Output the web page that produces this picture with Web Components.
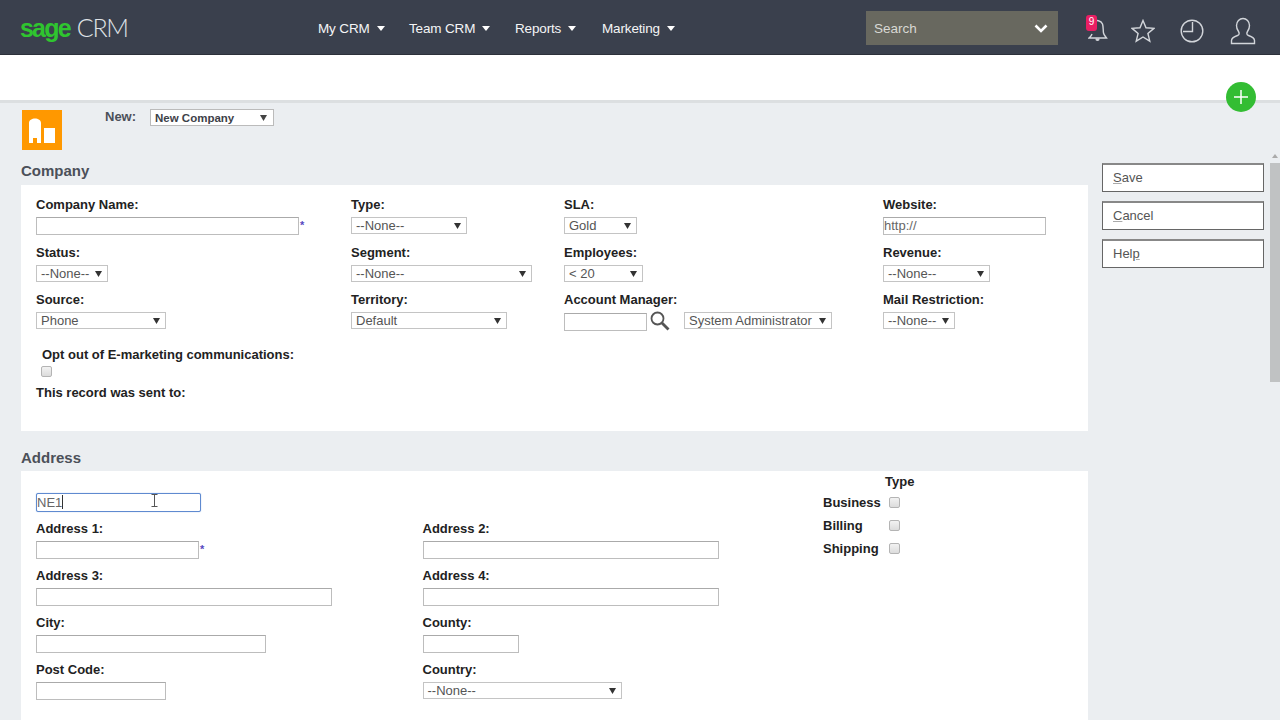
<!DOCTYPE html>
<html>
<head>
<meta charset="utf-8">
<title>Sage CRM</title>
<style>
  html, body { margin: 0; height: 100%; overflow: hidden; }
  body { background: #ebeef1; font-family: "Liberation Sans", Arial, sans-serif; }
</style>
</head>
<body>
<crm-header></crm-header>
<crm-band></crm-band>
<crm-main>
  <crm-toolbar></crm-toolbar>

  <crm-panel heading="Company" style="--panel-height: 246px; --panel-top: 12px">
    <div slot="body" style="display: grid; grid-template-columns: 315px 213px 319px 1fr; row-gap: 9.5px">
      <crm-field label="Company Name:"><crm-input w="263" required></crm-input></crm-field>
      <crm-field label="Type:"><crm-select w="116" value="--None--"></crm-select></crm-field>
      <crm-field label="SLA:"><crm-select w="73" value="Gold"></crm-select></crm-field>
      <crm-field label="Website:"><crm-input w="163" value="http://"></crm-input></crm-field>

      <crm-field label="Status:"><crm-select w="72" value="--None--"></crm-select></crm-field>
      <crm-field label="Segment:"><crm-select w="181" value="--None--"></crm-select></crm-field>
      <crm-field label="Employees:"><crm-select w="79" value="&lt; 20"></crm-select></crm-field>
      <crm-field label="Revenue:"><crm-select w="107" value="--None--"></crm-select></crm-field>

      <crm-field label="Source:"><crm-select w="130" value="Phone"></crm-select></crm-field>
      <crm-field label="Territory:"><crm-select w="156" value="Default"></crm-select></crm-field>
      <crm-field label="Account Manager:">
        <crm-input w="83" style="margin-top: 1px"></crm-input>
        <crm-search-icon></crm-search-icon>
        <crm-select w="148" value="System Administrator"></crm-select>
      </crm-field>
      <crm-field label="Mail Restriction:"><crm-select w="72" value="--None--"></crm-select></crm-field>
    </div>
    <crm-optout slot="body"></crm-optout>
  </crm-panel>

  <crm-panel heading="Address" style="--panel-height: 300px; --panel-top: 2px; --title-gap: 19px; --title-bottom: 5px">
    <div slot="body" style="display: flex">
      <div style="width: 787px; padding-top: 20px; flex: none">
        <crm-focus-input></crm-focus-input>
        <div style="display: grid; grid-template-columns: 386.5px 1fr; row-gap: 9.3px; margin-top: 8.500px">
          <crm-field label="Address 1:"><crm-input w="163" required></crm-input></crm-field>
          <crm-field label="Address 2:"><crm-input w="296"></crm-input></crm-field>
          <crm-field label="Address 3:"><crm-input w="296"></crm-input></crm-field>
          <crm-field label="Address 4:"><crm-input w="296"></crm-input></crm-field>
          <crm-field label="City:"><crm-input w="230"></crm-input></crm-field>
          <crm-field label="County:"><crm-input w="96"></crm-input></crm-field>
          <crm-field label="Post Code:"><crm-input w="130"></crm-input></crm-field>
          <crm-field label="Country:"><crm-select w="199" value="--None--"></crm-select></crm-field>
        </div>
      </div>
      <crm-address-type></crm-address-type>
    </div>
  </crm-panel>

  <crm-button slot="actions" text="Save" key="0"></crm-button>
  <crm-button slot="actions" text="Cancel" key="0"></crm-button>
  <crm-button slot="actions" text="Help" key="3"></crm-button>
</crm-main>

<script>
class CrmHeader extends HTMLElement {
  constructor() {
    super();
    this.attachShadow({ mode: 'open' });
    const navItems = [['My CRM', 91], ['Team CRM', 106], ['Reports', 87], ['Marketing', 80]];
    const nav = navItems.map(([name, w]) => `
      <a style="width:${w}px">${name}<svg width="8" height="5" viewBox="0 0 8 5"><path d="M0 0h8L4 5z" fill="#fff"/></svg></a>`).join('');
    this.shadowRoot.innerHTML = `
      <style>
        :host {
          display: flex;
          align-items: center;
          height: 54px;
          background: #3a404d;
          border-bottom: 1px solid #2c303a;
          color: #fff;
        }
        .logo { width: 318px; padding-left: 20px; box-sizing: border-box; flex: none; display: flex; align-items: baseline; height: 54px; line-height: 54px; }
        .sage { color: #2fc52f; font: bold 25px/54px "Liberation Sans", sans-serif; letter-spacing: -1.8px; }
        .crm { color: #dfe2e6; font: 300 25px/54px Lato, sans-serif; margin-left: 7px; letter-spacing: -1.3px; }
        nav { display: flex; width: 548px; flex: none; padding-top: 2px; }
        a { display: flex; align-items: center; gap: 7px; font-size: 13.5px; letter-spacing: -0.15px; color: #f4f5f6; white-space: nowrap; }
        .search {
          width: 192px; height: 34px; background: #68685f; flex: none; margin-top: 2px;
          box-sizing: border-box; padding: 0 10px 0 8px;
          display: flex; align-items: center; justify-content: space-between;
          color: #d8d8d4; font-size: 13.5px;
        }
        .icons { position: relative; flex: 1; height: 54px; }
        .icons svg { position: absolute; fill: none; stroke: #d2d5da; stroke-width: 1.4; }
        .badge {
          position: absolute; left: 28px; top: 15px; width: 11px; height: 16px;
          background: #e91e63; border-radius: 3px; color: #fff;
          font-size: 10px; line-height: 13px; text-align: center;
        }
      </style>
      <div class="logo"><span class="sage">sage</span><span class="crm">CRM</span></div>
      <nav>${nav}</nav>
      <div class="search">Search
        <svg width="14" height="9" viewBox="0 0 14 9"><path d="M1.5 1.5L7 7l5.5-5.5" fill="none" stroke="#fff" stroke-width="2.6"/></svg>
      </div>
      <div class="icons">
        <svg style="left:30px;top:19px" width="20" height="24" viewBox="0 0 20 24"><path d="M6 2.5C8 1 13 1 14.500 5c1 3 .5 6 1 9 .4 2 2 3.500 3 5H1c1-1 2.500-2 3-4"/><path d="M8 19.500c0 2.500 3 2.500 3 0" fill="#d2d5da"/></svg>
        <div class="badge">9</div>
        <svg style="left:73px;top:19px" width="24" height="24" viewBox="0 0 24 24"><path d="M12 1.500l3 7.300 7.900.6-6 5.100 1.900 7.700L12 18l-6.800 4.200 1.900-7.700-6-5.100 7.900-.6z"/></svg>
        <svg style="left:122px;top:19px" width="24" height="24" viewBox="0 0 24 24"><circle cx="12" cy="12" r="10.800"/><path d="M12.500 3v9.500H3"/></svg>
        <svg style="left:172px;top:17px" width="26" height="28" viewBox="0 0 26 28"><path d="M1.500 26.500v-3c0-3 3-4 6-5 2-.7 2-2.500 1-4-1.500-2-2-4-2-6 0-4 3-7 6.500-7s6.500 3 6.500 7c0 2-.5 4-2 6-1 1.500-1 3.300 1 4 3 1 6 2 6 5v3z"/></svg>
      </div>
    `;
  }
}

class CrmBand extends HTMLElement {
  constructor() {
    super();
    this.attachShadow({ mode: 'open' });
    this.shadowRoot.innerHTML = `
      <style>
        :host { display: block; position: relative; height: 45px; background: #fff; border-bottom: 3px solid #dcdfe1; }
        .add {
          position: absolute; left: 1226px; top: 27px; width: 30px; height: 30px;
          border-radius: 50%; background: #33bd33; z-index: 2;
          display: flex; align-items: center; justify-content: center;
        }
      </style>
      <div class="add">
        <svg width="14" height="14" viewBox="0 0 14 14"><path d="M7 0v14M0 7h14" stroke="#fff" stroke-width="1.500"/></svg>
      </div>
    `;
  }
}

class CrmMain extends HTMLElement {
  constructor() {
    super();
    this.attachShadow({ mode: 'open' });
    this.shadowRoot.innerHTML = `
      <style>
        :host { display: flex; height: 617px; overflow: hidden; }
        .content { width: 1067px; margin-left: 21px; flex: none; }
        .actions { width: 162px; margin-left: 14px; padding-top: 60px; flex: none; display: flex; flex-direction: column; gap: 9px; }
        .scroll { width: 10px; margin-left: 6px; flex: none; padding-top: 51px; }
        .arrow { width: 0; height: 0; margin: 0 auto 5px; border: 3px solid transparent; border-top: 0; border-bottom: 4px solid #aaa; }
        .thumb { height: 219px; background: #c0c2c3; }
      </style>
      <div class="content"><slot></slot></div>
      <div class="actions"><slot name="actions"></slot></div>
      <div class="scroll"><div class="arrow"></div><div class="thumb"></div></div>
    `;
  }
}

class CrmToolbar extends HTMLElement {
  constructor() {
    super();
    this.attachShadow({ mode: 'open' });
    this.shadowRoot.innerHTML = `
      <style>
        :host { display: flex; padding: 7px 0 0 1px; height: 40px; align-items: flex-start; color: #4b5059; }
        .tile { width: 40px; height: 40px; background: #ff9800; flex: none; }
        .label { margin-left: 43px; font: bold 13px/14px "Liberation Sans", sans-serif; width: 45px; flex: none; }
        .select {
          width: 124px; height: 17px; box-sizing: border-box; margin-top: -1px;
          background: #fff; border: 1px solid #bbb; position: relative;
          font: bold 11.500px/16px "Liberation Sans", sans-serif; padding-left: 4px; color: #3d4148;
        }
        .select svg { position: absolute; right: 6px; top: 5px; }
      </style>
      <div class="tile">
        <svg width="40" height="40" viewBox="0 0 40 40">
          <path fill="#fff" d="M7 33V13c0-6 12-6 12 0v20h-4v-5h-4v5zM22 18h11v15H22z"/>
        </svg>
      </div>
      <div class="label">New:</div>
      <div class="select">New Company
        <svg width="7" height="6" viewBox="0 0 7 6"><path d="M0 0h7L3.500 6z" fill="#444"/></svg>
      </div>
    `;
  }
}

class CrmPanel extends HTMLElement {
  constructor() {
    super();
    this.attachShadow({ mode: 'open' });
    this.shadowRoot.innerHTML = `
      <style>
        :host { display: block; }
        .title { margin-top: var(--title-gap, 13px); height: 16px; font: bold 15px/16px "Liberation Sans", sans-serif; color: #4b5059; margin-bottom: var(--title-bottom, 6px); }
        .body { background: #fff; height: var(--panel-height); box-sizing: border-box; padding: var(--panel-top) 0 0 15px; }
      </style>
      <div class="title"></div>
      <div class="body"><slot name="body"></slot></div>
    `;
  }
  connectedCallback() {
    this.shadowRoot.querySelector('.title').textContent = this.getAttribute('heading');
  }
}

class CrmField extends HTMLElement {
  constructor() {
    super();
    this.attachShadow({ mode: 'open' });
    this.shadowRoot.innerHTML = `
      <style>
        :host { display: block; }
        .label { font: bold 13px/16px "Liberation Sans", sans-serif; color: #222; margin-bottom: 4px; }
        .row { display: flex; align-items: flex-start; height: 18px; }
      </style>
      <div class="label"></div>
      <div class="row"><slot></slot></div>
    `;
  }
  connectedCallback() {
    this.shadowRoot.querySelector('.label').textContent = this.getAttribute('label');
  }
}

class CrmInput extends HTMLElement {
  constructor() {
    super();
    this.attachShadow({ mode: 'open' });
    this.shadowRoot.innerHTML = `
      <style>
        :host { display: inline-flex; flex: none; }
        .box {
          height: 18px; box-sizing: border-box; background: #fff;
          border: 1px solid #bdbdbd; border-top-color: #aaa;
          font: 13px/16px "Liberation Sans", sans-serif; color: #666;
        }
        .req { color: #5548c0; font: bold 11px/16px "Liberation Sans", sans-serif; width: 0; margin-left: 1px; }
      </style>
      <div class="box"></div>
    `;
  }
  connectedCallback() {
    const box = this.shadowRoot.querySelector('.box');
    box.style.width = this.getAttribute('w') + 'px';
    box.textContent = this.getAttribute('value') || '';
    if (this.hasAttribute('required')) {
      const req = document.createElement('span');
      req.className = 'req';
      req.textContent = '*';
      this.shadowRoot.appendChild(req);
    }
  }
}

class CrmSelect extends HTMLElement {
  constructor() {
    super();
    this.attachShadow({ mode: 'open' });
    this.shadowRoot.innerHTML = `
      <style>
        :host { display: block; flex: none; }
        .box {
          height: 17px; box-sizing: border-box; background: #fff; position: relative;
          border: 1px solid #c4c4c4;
          font: 13px/15px "Liberation Sans", sans-serif; color: #555; padding-left: 4px; white-space: nowrap;
        }
        svg { position: absolute; right: 5px; top: 5px; }
      </style>
      <div class="box"><span></span>
        <svg width="7" height="6" viewBox="0 0 7 6"><path d="M0 0h7L3.500 6z" fill="#333"/></svg>
      </div>
    `;
  }
  connectedCallback() {
    this.shadowRoot.querySelector('.box').style.width = this.getAttribute('w') + 'px';
    this.shadowRoot.querySelector('span').textContent = this.getAttribute('value');
  }
}

class CrmSearchIcon extends HTMLElement {
  constructor() {
    super();
    this.attachShadow({ mode: 'open' });
    this.shadowRoot.innerHTML = `
      <style>:host { display: block; width: 37px; height: 20px; flex: none; margin-top: -1px; padding-left: 3px; box-sizing: border-box; }</style>
      <svg width="20" height="20" viewBox="0 0 20 20" fill="none" stroke="#555">
        <circle cx="7.500" cy="7.500" r="6" stroke-width="1.800"/>
        <path d="M12 12l6.500 6.500" stroke-width="2.800"/>
      </svg>
    `;
  }
}

class CrmOptout extends HTMLElement {
  constructor() {
    super();
    this.attachShadow({ mode: 'open' });
    this.shadowRoot.innerHTML = `
      <style>
        :host { display: block; margin-top: 17px; font: bold 13px/16px "Liberation Sans", sans-serif; color: #222; }
        .opt { padding-left: 6px; }
        crm-check { margin: 3px 0 8px 5px; }
      </style>
      <div class="opt">Opt out of E-marketing communications:</div>
      <crm-check></crm-check>
      <div>This record was sent to:</div>
    `;
  }
}

class CrmCheck extends HTMLElement {
  constructor() {
    super();
    this.attachShadow({ mode: 'open' });
    this.shadowRoot.innerHTML = `
      <style>
        :host {
          display: block; width: 11px; height: 11px; box-sizing: border-box;
          border: 1px solid #b4b4b4; border-radius: 2px;
          background: linear-gradient(#f2f2f2, #dcdcdc);
        }
      </style>
    `;
  }
}

class CrmFocusInput extends HTMLElement {
  constructor() {
    super();
    this.attachShadow({ mode: 'open' });
    this.shadowRoot.innerHTML = `
      <style>
        :host {
          display: block; position: relative; width: 165px; height: 19px; box-sizing: border-box;
          border: 1px solid #5f8ad0; border-radius: 2px; box-shadow: 0 0 1px #7fa3de;
          font: 13px/17px "Liberation Sans", sans-serif; color: #666; background: #fff;
        }
        .caret { display: inline-block; width: 1px; height: 14px; background: #333; vertical-align: -2px; }
        svg { position: absolute; left: 114px; top: 0; }
      </style>
      NE1<span class="caret"></span>
      <svg width="7" height="13" viewBox="0 0 7 13" fill="none" stroke="#555" stroke-width="1">
        <path d="M0.500 .5h6M0.500 12.500h6M3.500 .5v12"/>
      </svg>
    `;
  }
}

class CrmAddressType extends HTMLElement {
  constructor() {
    super();
    this.attachShadow({ mode: 'open' });
    this.shadowRoot.innerHTML = `
      <style>
        :host {
          display: grid; grid-template-columns: 66px 11px; grid-template-rows: 17.700px repeat(3, 23.300px); align-items: center;
          align-self: flex-start; font: bold 13px/17px "Liberation Sans", sans-serif; color: #222;
        }
        .type { grid-column: 1 / 3; padding-left: 62px; }
      </style>
      <div class="type">Type</div>
      <div>Business</div><crm-check></crm-check>
      <div>Billing</div><crm-check></crm-check>
      <div>Shipping</div><crm-check></crm-check>
    `;
  }
}

class CrmButton extends HTMLElement {
  constructor() {
    super();
    this.attachShadow({ mode: 'open' });
    this.shadowRoot.innerHTML = `
      <style>
        :host {
          display: block; height: 29px; box-sizing: border-box; background: #fff;
          border: 1px solid #666; border-top: 2px solid #888;
          font: 13px/26px "Liberation Sans", sans-serif; color: #555; padding-left: 10px;
        }
        u { text-decoration-color: #aaa; }
      </style>
      <span></span>
    `;
  }
  connectedCallback() {
    const text = this.getAttribute('text');
    const key = Number(this.getAttribute('key'));
    this.shadowRoot.querySelector('span').innerHTML =
      text.slice(0, key) + '<u>' + text[key] + '</u>' + text.slice(key + 1);
  }
}

customElements.define('crm-header', CrmHeader);
customElements.define('crm-band', CrmBand);
customElements.define('crm-main', CrmMain);
customElements.define('crm-toolbar', CrmToolbar);
customElements.define('crm-panel', CrmPanel);
customElements.define('crm-field', CrmField);
customElements.define('crm-input', CrmInput);
customElements.define('crm-select', CrmSelect);
customElements.define('crm-search-icon', CrmSearchIcon);
customElements.define('crm-optout', CrmOptout);
customElements.define('crm-check', CrmCheck);
customElements.define('crm-focus-input', CrmFocusInput);
customElements.define('crm-address-type', CrmAddressType);
customElements.define('crm-button', CrmButton);
</script>
</body>
</html>
